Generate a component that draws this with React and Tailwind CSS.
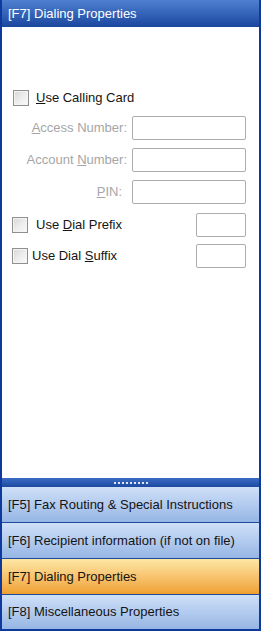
import React from 'react'

const font = { fontFamily: '"Liberation Sans", Arial, sans-serif' }

const Check = () => (
    <span className="inline-block w-[16px] h-[16px] border border-[#8f8f8f] bg-gradient-to-br from-[#d6d6d6] via-[#ececec] to-[#fafafa] shadow-[inset_0_0_0_1px_#f4f4f4]" />
)

const Field = ({ className }) => (
    <div className={`h-[24px] border border-[#abadb3] bg-white rounded-[2px] ${className}`} />
)

const Tab = ({ label, active }) => (
    <div
        className={`h-[36px] flex items-center px-[6px] text-[13px] text-[#141414] border-b border-[#1e4a9e] ${
            active
                ? 'bg-gradient-to-b from-[#fde7a4] to-[#efa02c]'
                : 'bg-gradient-to-b from-[#cfe0f7] to-[#97b6e5]'
        }`}
    >
        {label}
    </div>
)

export default function App() {
    return (
        <div style={font} className="w-[261px] h-[631px] flex flex-col border-x-2 border-b-2 border-[#0d3a9c] bg-white">
            {/* Title */}
            <div className="h-[27px] shrink-0 flex items-center px-[6px] text-[13px] text-white bg-gradient-to-b from-[#4f80d0] to-[#1b479f]">
                [F7] Dialing Properties
            </div>

            {/* Form */}
            <div className="flex-1 pt-[63px] text-[13px]">
                <div className="flex items-center pl-[11px] h-[16px]">
                    <Check />
                    <span className="ml-[7px] text-[#141414]"><u>U</u>se Calling Card</span>
                </div>
                <div className="mt-[10px] flex items-center h-[24px]">
                    <span className="w-[125px] text-right text-[#a6a6a6]"><u>A</u>ccess Number:</span>
                    <Field className="ml-[5px] w-[114px]" />
                </div>
                <div className="mt-[8px] flex items-center h-[24px]">
                    <span className="w-[125px] text-right text-[#a6a6a6]">Account <u>N</u>umber:</span>
                    <Field className="ml-[5px] w-[114px]" />
                </div>
                <div className="mt-[8px] flex items-center h-[24px]">
                    <span className="w-[120px] text-right text-[#a6a6a6]"><u>P</u>IN:</span>
                    <Field className="ml-[10px] w-[114px]" />
                </div>
                <div className="mt-[9px] flex items-center h-[24px] pl-[10px] pr-[13px]">
                    <Check />
                    <span className="ml-[8px] flex-1 text-[#141414]">Use <u>D</u>ial Prefix</span>
                    <Field className="w-[50px]" />
                </div>
                <div className="mt-[7px] flex items-center h-[24px] pl-[10px] pr-[13px]">
                    <Check />
                    <span className="ml-[4px] flex-1 text-[#141414]">Use Dial <u>S</u>uffix</span>
                    <Field className="w-[50px]" />
                </div>
            </div>

            {/* Splitter */}
            <div className="h-[9px] shrink-0 flex items-center justify-center bg-gradient-to-b from-[#3b6cc4] to-[#1c4aa0]">
                <div className="flex gap-[2px]">
                    {[...Array(9)].map((_, i) => (
                        <span key={i} className="w-[2px] h-[2px] bg-[#dfe8f7]" />
                    ))}
                </div>
            </div>

            {/* Tabs */}
            <Tab label="[F5] Fax Routing & Special Instructions" />
            <Tab label="[F6] Recipient information (if not on file)" />
            <Tab label="[F7] Dialing Properties" active />
            <div className="h-[34px] shrink-0 flex items-center px-[6px] text-[13px] text-[#141414] bg-gradient-to-b from-[#cfe0f7] to-[#97b6e5]">
                [F8] Miscellaneous Properties
            </div>
        </div>
    )
}
